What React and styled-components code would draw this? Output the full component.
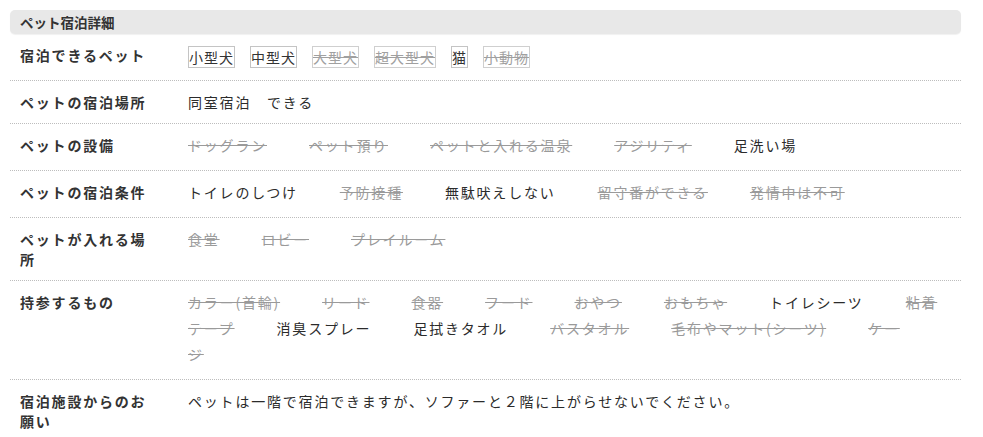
import React from "react";
import styled, { createGlobalStyle } from "styled-components";

const details = [
  {
    label: "宿泊できるペット",
    type: "tags",
    items: [
      { text: "小型犬", on: true },
      { text: "中型犬", on: true },
      { text: "大型犬", on: false },
      { text: "超大型犬", on: false },
      { text: "猫", on: true },
      { text: "小動物", on: false },
    ],
  },
  {
    label: "ペットの宿泊場所",
    type: "text",
    text: "同室宿泊　できる",
  },
  {
    label: "ペットの設備",
    type: "list",
    items: [
      { text: "ドッグラン", on: false },
      { text: "ペット預り", on: false },
      { text: "ペットと入れる温泉", on: false },
      { text: "アジリティ", on: false },
      { text: "足洗い場", on: true },
    ],
  },
  {
    label: "ペットの宿泊条件",
    type: "list",
    items: [
      { text: "トイレのしつけ", on: true },
      { text: "予防接種", on: false },
      { text: "無駄吠えしない", on: true },
      { text: "留守番ができる", on: false },
      { text: "発情中は不可", on: false },
    ],
  },
  {
    label: "ペットが入れる場所",
    type: "list",
    items: [
      { text: "食堂", on: false },
      { text: "ロビー", on: false },
      { text: "プレイルーム", on: false },
    ],
  },
  {
    label: "持参するもの",
    type: "list",
    items: [
      { text: "カラー(首輪)", on: false },
      { text: "リード", on: false },
      { text: "食器", on: false },
      { text: "フード", on: false },
      { text: "おやつ", on: false },
      { text: "おもちゃ", on: false },
      { text: "トイレシーツ", on: true },
      { text: "粘着テープ", on: false },
      { text: "消臭スプレー", on: true },
      { text: "足拭きタオル", on: true },
      { text: "バスタオル", on: false },
      { text: "毛布やマット(シーツ)", on: false },
      { text: "ケージ", on: false },
    ],
  },
  {
    label: "宿泊施設からのお願い",
    type: "text",
    text: "ペットは一階で宿泊できますが、ソファーと２階に上がらせないでください。",
  },
];

const App = () => {
  return (
    <>
      <GlobalStyle />
      <Page>
        <Heading>ペット宿泊詳細</Heading>
        {details.map((row) => (
          <Row key={row.label}>
            <Label>{row.label}</Label>
            {row.type === "tags" && (
              <TagList>
                {row.items.map((item) => (
                  <Tag key={item.text} $off={!item.on}>
                    {item.text}
                  </Tag>
                ))}
              </TagList>
            )}
            {row.type === "list" && (
              <ItemList>
                {row.items.map((item) => (
                  <Item key={item.text} $off={!item.on}>
                    {item.text}
                  </Item>
                ))}
              </ItemList>
            )}
            {row.type === "text" && <Note>{row.text}</Note>}
          </Row>
        ))}
      </Page>
    </>
  );
};

const GlobalStyle = createGlobalStyle`
  body {
    margin: 0;
    background: #fff;
    font-family: "Noto Sans CJK JP", "Noto Sans", sans-serif;
    color: #333;
  }
`;

const Page = styled.div`
  padding: 10px 22px 0 10px;
`;

const Heading = styled.div`
  height: 24px;
  line-height: 24px;
  padding: 0 10px;
  background-color: #e8e8e8;
  border-radius: 5px;
  box-shadow: 0 1px 1px rgba(0, 0, 0, 0.06);
  font-size: 13.5px;
  font-weight: bold;
  color: #333;
`;

const Row = styled.div`
  display: grid;
  grid-template-columns: 135px 1fr;
  column-gap: 33px;
  padding: 8px 18px 8px 10px;
  border-bottom: 1px dotted #bdbdbd;
`;

const Label = styled.div`
  padding: 3px 0 3px;
  font-size: 14px;
  line-height: 20px;
  font-weight: bold;
  letter-spacing: 1.8px;
  color: #333;
`;

const TagList = styled.div`
  display: flex;
  align-items: flex-start;
  padding: 4px 0 4px;
`;

const Tag = styled.span`
  display: inline-block;
  margin-right: 15px;
  border: 1px solid ${(p) => (p.$off ? "#cfcfcf" : "#c4c4c4")};
  font-size: 14px;
  line-height: 20px;
  letter-spacing: 1px;
  color: ${(p) => (p.$off ? "#a0a0a0" : "#333")};
  text-decoration: ${(p) => (p.$off ? "line-through" : "none")};
`;

const ItemList = styled.div`
  padding-bottom: 4px;
  font-size: 14px;
  line-height: 26px;
  letter-spacing: 1.8px;
`;

const Item = styled.span`
  margin-right: 42px;
  color: ${(p) => (p.$off ? "#9a9a9a" : "#2b2b2b")};
  text-decoration: ${(p) => (p.$off ? "line-through" : "none")};
`;

const Note = styled.div`
  font-size: 14px;
  line-height: 26px;
  letter-spacing: 1.8px;
  color: #2b2b2b;
`;

export default App;
